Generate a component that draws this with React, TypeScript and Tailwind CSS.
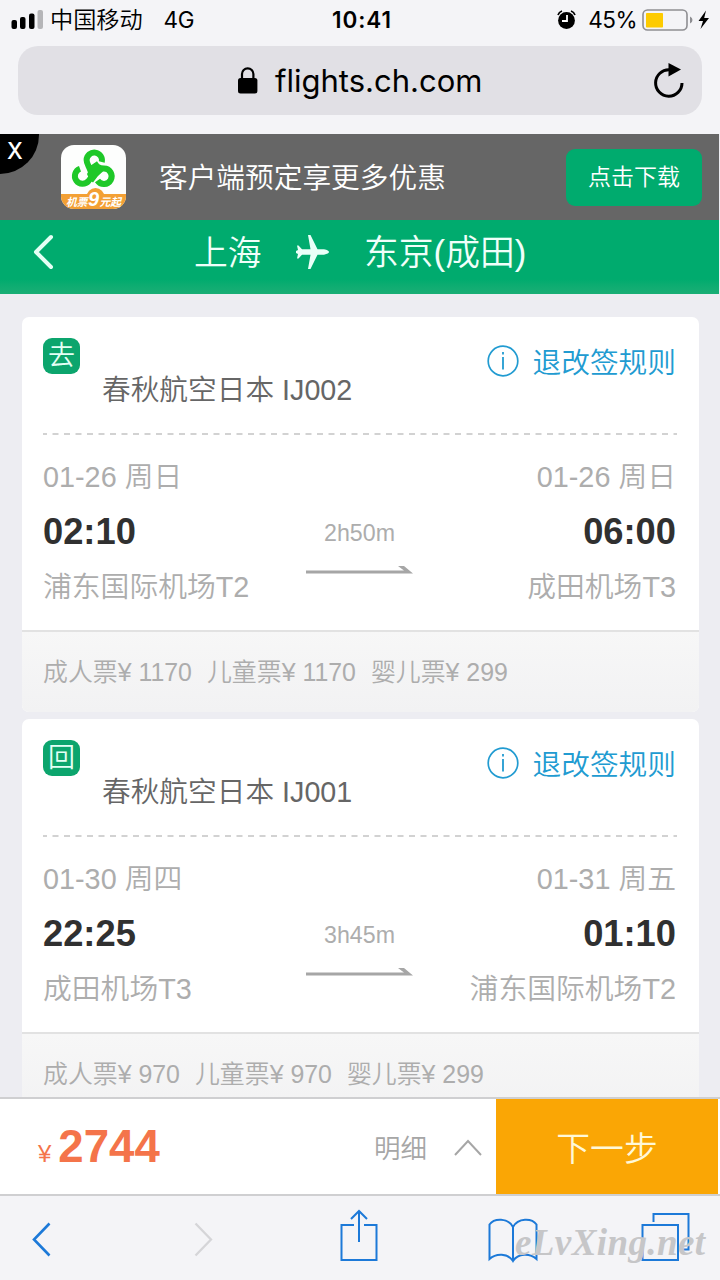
import React from 'react';

type Leg = {
  badge: string;
  flight: string;
  duration: string;
  from: { date: string; time: string; airport: string };
  to: { date: string; time: string; airport: string };
  prices: string[];
};

const legs: Leg[] = [
  {
    badge: '去',
    flight: '春秋航空日本 IJ002',
    duration: '2h50m',
    from: { date: '01-26 周日', time: '02:10', airport: '浦东国际机场T2' },
    to: { date: '01-26 周日', time: '06:00', airport: '成田机场T3' },
    prices: ['成人票¥ 1170', '儿童票¥ 1170', '婴儿票¥ 299'],
  },
  {
    badge: '回',
    flight: '春秋航空日本 IJ001',
    duration: '3h45m',
    from: { date: '01-30 周四', time: '22:25', airport: '成田机场T3' },
    to: { date: '01-31 周五', time: '01:10', airport: '浦东国际机场T2' },
    prices: ['成人票¥ 970', '儿童票¥ 970', '婴儿票¥ 299'],
  },
];

function StatusBar() {
  return (
    <div className="flex h-[40px] items-center pl-[11px] pr-[8px] text-black">
      <svg width="32" height="20" viewBox="0 0 32 20" className="shrink-0">
        <rect x="0.5" y="10" width="5.5" height="9" rx="2" />
        <rect x="9" y="7" width="5.5" height="12" rx="2" />
        <rect x="18" y="3.5" width="5.5" height="15.5" rx="2" />
        <rect x="26.5" y="0" width="5.5" height="19" rx="2" fill="#b5b5b8" />
      </svg>
      <span className="ml-[7px] w-[114px] pt-[2px] whitespace-nowrap text-[23.2px] leading-none font-[350]">中国移动</span>
      <span className="w-[169px] whitespace-nowrap text-[22.5px] leading-none tracking-[-0.4px]">4G</span>
      <span className="w-[225px] whitespace-nowrap text-[22.5px] leading-none font-semibold tracking-[0.9px]">10:41</span>
      <svg width="20" height="20" viewBox="0 0 20 20" className="shrink-0">
        <circle cx="10.5" cy="10.5" r="8.4" />
        <path d="M2 5 Q3 2 6 1M15 1 Q18 2 19 5" fill="none" stroke="#000" strokeWidth="1.7" />
        <path d="M11 5v6H6" fill="none" stroke="#fff" strokeWidth="1.8" />
      </svg>
      <span className="ml-[12px] w-[54px] whitespace-nowrap text-[22.5px] leading-none tracking-[-0.5px]">45%</span>
      <svg width="70" height="22" viewBox="0 0 70 22" className="shrink-0">
        <rect x="1" y="1" width="44" height="20" rx="4.5" fill="none" stroke="#8e8e92" strokeWidth="1.6" />
        <rect x="4" y="4" width="17" height="14.5" rx="0.8" fill="#fdcb00" />
        <path d="M48 7.500q2.500 1 2.500 3.500t-2.500 3.500z" fill="#8e8e92" />
        <path d="M64 1.500L56.500 12h4.500l-2.500 8L67 9h-4.800z" />
      </svg>
    </div>
  );
}

function AddressBar() {
  return (
    <div className="mx-[18px] mt-[6px] flex h-[69px] items-center rounded-[20px] bg-[#e1e0e5] text-black">
      <svg width="20" height="27" viewBox="0 0 20 27" className="ml-[220px] shrink-0">
        <path d="M4 12V7a5.700 5.700 0 0 1 11.400 0v5" fill="none" stroke="#000" strokeWidth="2.2" />
        <rect x="0" y="11" width="19.4" height="15.5" rx="2.5" />
      </svg>
      <span className="ml-[17px] w-[378px] whitespace-nowrap text-[31px] leading-none">flights.ch.com</span>
      <svg width="32" height="36" viewBox="0 0 32 36" className="shrink-0">
        <path d="M16.500 6.800A13.200 13.200 0 1 0 29 20" fill="none" stroke="#000" strokeWidth="3" />
        <path d="M15.500 0v13.500L28 6.500z" />
      </svg>
    </div>
  );
}

function AppLogo() {
  return (
    <svg width="65" height="65" viewBox="0 0 65 65" className="shrink-0">
      <defs>
        <clipPath id="logo-shape">
          <rect width="65" height="64" rx="13" />
        </clipPath>
      </defs>
      <g clipPath="url(#logo-shape)">
        <rect width="65" height="65" fill="#fdfefd" />
        <g fill="none" stroke="#1ec828" strokeWidth="6">
          <path d="M40.800 17A7.700 7.700 0 1 0 25.600 15C25.600 19 28 21 30 27" />
          <path d="M19 23.800A7.700 7.700 0 1 0 27.500 36L32 30" />
          <path d="M36.500 35.500A7.700 7.700 0 1 0 43 23.600C37 23.500 35.500 21 33.500 18" />
        </g>
        <path d="M25 19Q29 26 26 29L28.500 35L32 37.500L37 31L43 25.500Q36 23 34 18L31 20z" fill="#1ec828" />
        <rect y="49" width="65" height="16" fill="#f3a034" />
        <circle cx="34.5" cy="52" r="9" fill="#f3a034" />
      </g>
      <g fill="#fff" fontFamily="'Liberation Sans','Noto Sans CJK SC',sans-serif" fontWeight="700" fontStyle="italic">
        <text x="5" y="60.5" fontSize="10.8">机票</text>
        <text x="27" y="61" fontSize="20">9</text>
        <text x="38.5" y="60.5" fontSize="10.8">元起</text>
      </g>
    </svg>
  );
}

function Banner() {
  return (
    <div className="relative mt-[19px] flex h-[86px] items-center bg-[#666666] pl-[61px] text-white">
      <div className="absolute left-0 top-0 flex h-[40px] w-[39px] items-start rounded-br-[39px] bg-black pl-[7px] pt-[5px] text-[22.5px] leading-[24px] font-medium [font-family:Inter,sans-serif]">X</div>
      <AppLogo />
      <span className="ml-[33px] w-[407px] pt-[2px] whitespace-nowrap text-[28.7px] leading-none">客户端预定享更多优惠</span>
      <span className="flex h-[57px] w-[136px] items-center justify-center rounded-[9px] bg-[#00ab6e] text-[23px] leading-none">点击下载</span>
    </div>
  );
}

function RouteHeader() {
  return (
    <div className="flex h-[74px] items-start bg-gradient-to-b from-[#00ab6e] from-80% to-[#19ae75] pl-[33px] pt-[14px] text-[#f0fffa]">
      <svg width="22" height="36" viewBox="0 0 22 36" className="shrink-0">
        <path d="M18 3L3 18l15 15" fill="none" stroke="#e4fff5" strokeWidth="4" strokeLinecap="round" strokeLinejoin="round" />
      </svg>
      <span className="ml-[139px] w-[101px] pt-px whitespace-nowrap text-[33.8px] leading-[36px]">上海</span>
      <svg width="35" height="36" viewBox="0 0 35 36" className="shrink-0">
        <path d="M13 1H15.500L22.500 15.300H29Q34 16.500 34 18T29 20.700H22.500L15.500 35H13L15.500 20.700H7L3.500 24.500H2L3 20L1 19V17L3 16L2 11.500H3.500L7 15.300H15.500z" fill="#e9fff8" />
      </svg>
      <span className="ml-[34px] pt-px whitespace-nowrap text-[34.8px] leading-[36px]">东京(成田)</span>
    </div>
  );
}

function LegCard({ leg }: { leg: Leg }) {
  return (
    <section className="flex h-[395px] shrink-0 flex-col overflow-hidden rounded-[7px] bg-white">
      <div className="mr-[23px] ml-[21px] flex h-[116px] items-start">
        <span className="mt-[21px] flex h-[36px] w-[37px] items-center justify-center rounded-[9px] bg-[#0ca56d] text-[27px] leading-none text-[#e4fff5]">
          {leg.badge}
        </span>
        <span className="mt-[55px] ml-[22px] whitespace-nowrap text-[28.7px] leading-[36px] text-[#666666]">{leg.flight}</span>
        <span className="mt-[28px] ml-auto flex items-center text-[28.7px] leading-[36px] whitespace-nowrap text-[#219bd1]">
          <svg width="32" height="32" viewBox="0 0 32 32" fill="none" stroke="#219bd1" className="mr-[14px] mb-[4px]">
            <circle cx="16" cy="16" r="14.8" strokeWidth="1.7" />
            <path d="M16 12v12.500M16 7v2.500" strokeWidth="1.8" />
          </svg>
          退改签规则
        </span>
      </div>
      <svg width="634" height="2" viewBox="0 0 634 2" className="ml-[21px] shrink-0">
        <path d="M0 1H634" stroke="#d2d2d2" strokeWidth="2" strokeDasharray="6 5.5" strokeDashoffset="2" />
      </svg>
      <div className="mr-[23px] ml-[21px] grid h-[195px] grid-cols-[1fr_107px_1fr] pt-[24px] text-[#adadad]">
        <div className="flex flex-col whitespace-nowrap">
          <span className="text-[28.8px] leading-[36px]">{leg.from.date}</span>
          <span className="mt-[17px] text-[36.3px] leading-[40px] font-bold text-[#303030]">{leg.from.time}</span>
          <span className="mt-[17px] text-[28.8px] leading-[36px]">{leg.from.airport}</span>
        </div>
        <div className="flex flex-col items-center">
          <span className="mt-[62px] text-[23.2px] leading-[24px]">{leg.duration}</span>
          <svg width="107" height="10" viewBox="0 0 107 10" className="mt-[20px]">
            <path d="M0 5.500H98L92 1h6L107 8.500H0z" fill="#a6a6a6" />
          </svg>
        </div>
        <div className="flex flex-col items-end whitespace-nowrap">
          <span className="text-[28.8px] leading-[36px]">{leg.to.date}</span>
          <span className="mt-[17px] text-[36.3px] leading-[40px] font-bold text-[#303030]">{leg.to.time}</span>
          <span className="mt-[17px] text-[28.8px] leading-[36px]">{leg.to.airport}</span>
        </div>
      </div>
      <div className="flex flex-1 items-center gap-[15px] border-t-2 border-[#e2e2e2] bg-gradient-to-b from-[#f7f7f7] to-[#f2f2f3] px-[21px] text-[24.9px] leading-none whitespace-nowrap text-[#adadad]">
        {leg.prices.map((p) => (
          <span key={p}>{p}</span>
        ))}
      </div>
    </section>
  );
}

function CheckoutBar() {
  return (
    <div className="flex h-[99px] items-stretch border-t-2 border-b-2 border-[#cfcfd1] bg-white">
      <div className="flex flex-1 items-baseline pt-[21px] pl-[38px] text-[#f4744a]">
        <span className="text-[24px]">¥</span>
        <span className="ml-[7px] text-[45.6px] leading-[54px] font-bold">2744</span>
      </div>
      <div className="flex items-center text-[26.5px] leading-none text-[#a6a6a6]">
        <span className="pt-[6px]">明细</span>
        <svg width="30" height="20" viewBox="0 0 30 20" fill="none" stroke="#a6a6a6" strokeWidth="2" className="mt-[3px] mr-[13px] ml-[26px]">
          <path d="M2 17L15 3l13 14" />
        </svg>
      </div>
      <div className="mr-[2px] flex w-[222px] items-center justify-center bg-[#faa605] pt-[6px] text-[33.8px] leading-none text-[#fff8d8]">下一步</div>
    </div>
  );
}

function BrowserToolbar() {
  return (
    <div className="relative flex h-[84px] items-center bg-[#f4f4f7]">
      <svg width="720" height="84" viewBox="0 0 720 84" fill="none" stroke="#1c79d8" strokeWidth="2">
        <path d="M49.500 27.500L34 43.500l15.500 16" strokeWidth="2.6" />
        <path d="M195.500 27.500L211 43.500l-15.500 16" stroke="#d5d5d8" strokeWidth="2.3" />
        <path d="M354 29h-12.500v35h35V29H364M359 46V15.500M351 23l8-8 8 8" />
        <path d="M513 31C508 21.500 494 22 489.500 28.500v34.500C496 57 508 57 513 65C518 57 530 57 536.500 63V28.500C532 22 518 21.500 513 31zV65" />
        <path d="M642.500 29h35.500v35h-35.500zM653.500 26v-8H688.500v35.500H681" />
      </svg>
      <span className="absolute top-[27px] left-[515px] text-[37px] leading-[40px] font-bold tracking-[0.4px] text-[#c6c6c8] italic [font-family:'Liberation_Serif',serif]">eLvXing.net</span>
    </div>
  );
}

export default function App() {
  return (
    <div className="flex h-[1280px] w-[720px] flex-col overflow-hidden bg-[#ededf2] font-[350] [font-family:'Liberation_Sans','Noto_Sans_CJK_SC',sans-serif]">
      <header className="h-[134px] shrink-0 bg-[#f4f4f7] font-normal [font-family:Inter,'Noto_Sans_CJK_SC',sans-serif]">
        <StatusBar />
        <AddressBar />
      </header>
      <div className="-mt-[19px] w-[719px] shrink-0">
        <Banner />
        <RouteHeader />
      </div>
      <main className="relative flex min-h-0 flex-1 flex-col gap-[7px] overflow-hidden pt-[23px] pr-[21px] pl-[22px]">
        {legs.map((leg) => (
          <LegCard key={leg.flight} leg={leg} />
        ))}
      </main>
      <footer className="shrink-0">
        <CheckoutBar />
        <BrowserToolbar />
      </footer>
    </div>
  );
}
